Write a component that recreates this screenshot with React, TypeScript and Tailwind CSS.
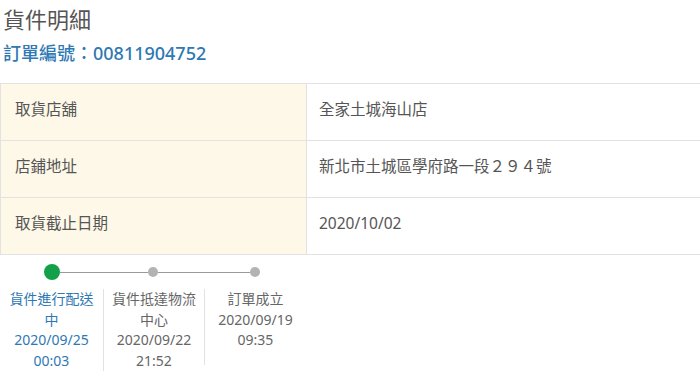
import React from "react";

const rows = [
  { label: "取貨店舖", value: "全家土城海山店" },
  { label: "店鋪地址", value: "新北市土城區學府路一段２９４號" },
  { label: "取貨截止日期", value: "2020/10/02" },
];

const steps = [
  { title: "貨件進行配送中", time: ["2020/09/25", "00:03"], active: true },
  { title: "貨件抵達物流中心", time: ["2020/09/22", "21:52"], active: false },
  { title: "訂單成立", time: ["2020/09/19", "09:35"], active: false },
];

const App = () => {
  return (
    <div
      className="w-[700px] h-[380px] bg-white overflow-hidden"
      style={{ fontFamily: '"Noto Sans", "Noto Sans CJK TC", sans-serif' }}
    >
      <h1 className="pl-[3px] pt-[4px] text-[22px] leading-[30px] text-[#555]">
        貨件明細
      </h1>
      <div className="pl-[3px] mt-[6px] text-[18px] leading-[26px] font-medium text-[#2e78b3]">
        訂單編號：00811904752
      </div>

      {/* info table */}
      <div className="mt-[17px] border-t border-l border-[#e2e2e2]">
        {rows.map((r) => (
          <div key={r.label} className="flex h-[57px] border-b border-[#e2e2e2]">
            <div className="w-[305px] bg-[#fdf8e7] pl-[14px] pt-[15px] text-[15.5px] leading-[20px] text-[#555]">
              {r.label}
            </div>
            <div className="flex-1 border-l border-[#e2e2e2] pl-[12px] pt-[15px] text-[15.5px] leading-[20px] text-[#555]">
              {r.value}
            </div>
          </div>
        ))}
      </div>

      {/* timeline */}
      <div className="mt-[9px] ml-[44px] flex h-[16px] items-center">
        <div className="w-[16px] h-[16px] rounded-full bg-[#14a04a]" />
        <div className="w-[88px] h-px bg-[#9a9a9a]" />
        <div className="w-[10px] h-[10px] rounded-full bg-[#b3b3b3]" />
        <div className="w-[92px] h-px bg-[#9a9a9a]" />
        <div className="w-[10px] h-[10px] rounded-full bg-[#b3b3b3]" />
      </div>
      <div className="mt-[9px] flex">
        {steps.map((s, i) => (
          <div
            key={s.title}
            className={
              i === 0
                ? "w-[103px] px-2 text-center text-[14px] leading-[20.5px] text-[#2e78b3]"
                : i === 1
                ? "w-[101px] px-2 text-center text-[14px] leading-[20.5px] text-[#666] border-l border-[#e2e2e2]"
                : "w-[102px] px-2 text-center text-[14px] leading-[20.5px] text-[#666] border-l border-[#e2e2e2] h-[76px]"
            }
          >
            <div>{s.title}</div>
            {s.time.map((t) => (
              <div key={t}>{t}</div>
            ))}
          </div>
        ))}
      </div>
    </div>
  );
};

export default App;
